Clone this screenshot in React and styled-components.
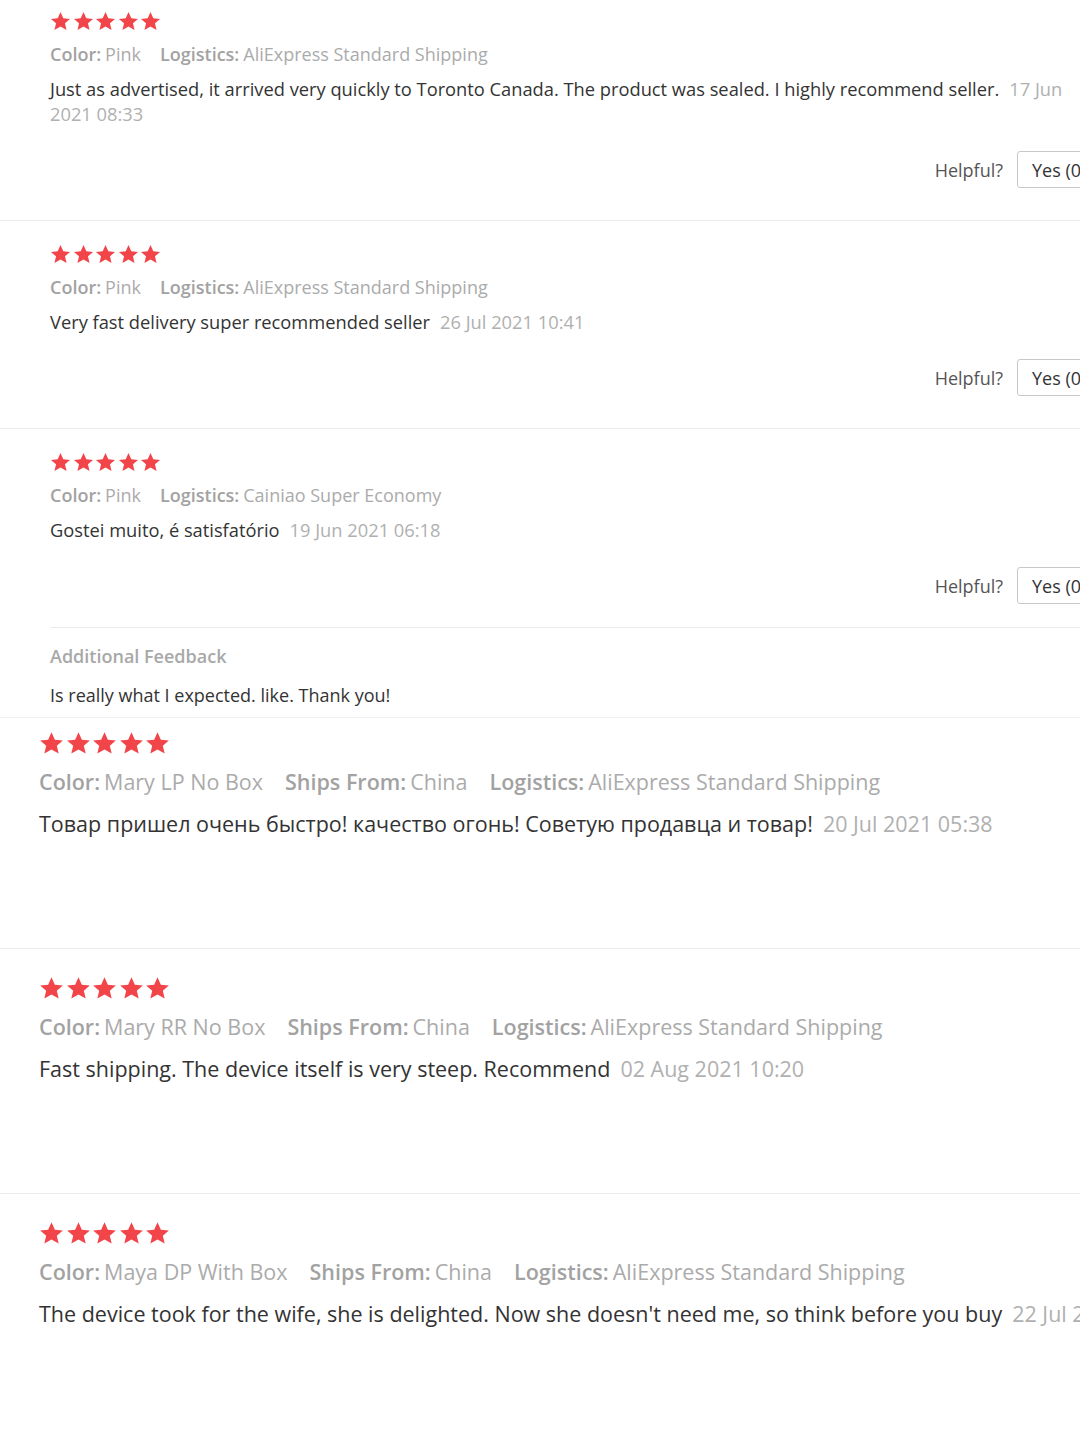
import React from 'react'
import styled, { createGlobalStyle } from 'styled-components'

const GlobalStyle = createGlobalStyle`
    html, body {
        margin: 0;
        padding: 0;
        background: #ffffff;
    }
    body {
        font-family: "Open Sans", "Noto Sans", sans-serif;
        overflow: hidden;
    }
`

const Page = styled.div`
    width: 1080px;
    height: 1438px;
    overflow: hidden;
    background: #fff;
`

// the top capture is from a wider page, so it runs past the right edge
const TopSection = styled.div`
    width: 1125px;
    border-bottom: 1px solid #f0f0f0;
`

const BottomSection = styled.div`
    width: 1080px;
`

const Item = styled.div`
    padding: ${p => p.$pt - (p.$crop || 0)}px 0 ${p => p.$pb}px ${p => p.$pl}px;
    border-bottom: ${p => p.$last ? 'none' : '1px solid #ececec'};
`

const Stars = styled.div`
    display: flex;
    gap: ${p => p.$gap}px;
    height: ${p => p.$size}px;
`

const Meta = styled.div`
    display: flex;
    gap: ${p => p.$gap}px;
    margin-top: ${p => p.$mt}px;
    font-size: ${p => p.$fs}px;
    line-height: ${p => p.$lh}px;
    color: #ababab;
    white-space: nowrap;
`

const MetaLabel = styled.span`
    font-weight: 600;
    color: #a2a2a2;
    margin-right: 4px;
`

const Body = styled.div`
    margin-top: ${p => p.$mt}px;
    font-size: ${p => p.$fs}px;
    line-height: ${p => p.$lh}px;
    color: #333;
    width: ${p => p.$w}px;
    white-space: ${p => p.$nowrap ? 'nowrap' : 'normal'};
`

const DateText = styled.span`
    color: #b0b0b0;
    margin-left: 10px;
`

const HelpfulRow = styled.div`
    display: flex;
    justify-content: flex-end;
    align-items: center;
    gap: 14px;
    margin-top: 25px;
    font-size: 18px;
`

const HelpfulLabel = styled.span`
    color: #555;
`

const YesButton = styled.button`
    height: 37px;
    padding: 0 14px;
    font-family: inherit;
    font-size: 18px;
    color: #333;
    background: #fff;
    border: 1px solid #c8c8c8;
    border-radius: 3px;
    width: 108px;
    text-align: left;
`

const Feedback = styled.div`
    margin-top: 23px;
    border-top: 1px solid #ececec;
    padding-top: 16px;
`

const FeedbackTitle = styled.div`
    font-size: 18px;
    line-height: 24px;
    font-weight: 600;
    color: #a8a8a8;
`

const FeedbackText = styled.div`
    margin-top: 15px;
    font-size: 18px;
    line-height: 24px;
    color: #333;
`

const Star = ({ size }) => (
    <svg width={size} height={size} viewBox="0 0 24 24">
        <path
            fill="#f2454a"
            d="M12 1.2l3.2 7.1 7.7.7-5.8 5.1 1.8 7.6L12 17.7l-6.9 4 1.8-7.6L1.1 9l7.7-.7z"
        />
    </svg>
)

const StarRow = ({ size, gap }) => (
    <Stars $size={size} $gap={gap}>
        {[0, 1, 2, 3, 4].map(i => <Star key={i} size={size} />)}
    </Stars>
)

const topReviews = [
    {
        id: 't1',
        meta: [['Color:', 'Pink'], ['Logistics:', 'AliExpress Standard Shipping']],
        text: 'Just as advertised, it arrived very quickly to Toronto Canada. The product was sealed. I highly recommend seller.',
        date: '17 Jun 2021 08:33'
    },
    {
        id: 't2',
        meta: [['Color:', 'Pink'], ['Logistics:', 'AliExpress Standard Shipping']],
        text: 'Very fast delivery super recommended seller',
        date: '26 Jul 2021 10:41'
    },
    {
        id: 't3',
        meta: [['Color:', 'Pink'], ['Logistics:', 'Cainiao Super Economy']],
        text: 'Gostei muito, é satisfatório',
        date: '19 Jun 2021 06:18',
        feedback: 'Is really what I expected. like. Thank you!'
    }
]

const bottomReviews = [
    {
        id: 'b1',
        meta: [['Color:', 'Mary LP No Box'], ['Ships From:', 'China'], ['Logistics:', 'AliExpress Standard Shipping']],
        text: 'Товар пришел очень быстро! качество огонь! Советую продавца и товар!',
        date: '20 Jul 2021 05:38'
    },
    {
        id: 'b2',
        meta: [['Color:', 'Mary RR No Box'], ['Ships From:', 'China'], ['Logistics:', 'AliExpress Standard Shipping']],
        text: 'Fast shipping. The device itself is very steep. Recommend',
        date: '02 Aug 2021 10:20'
    },
    {
        id: 'b3',
        meta: [['Color:', 'Maya DP With Box'], ['Ships From:', 'China'], ['Logistics:', 'AliExpress Standard Shipping']],
        text: 'The device took for the wife, she is delighted. Now she doesn\'t need me, so think before you buy',
        date: '22 Jul 2021 09:12'
    }
]

const MetaLine = ({ items, ...rest }) => (
    <Meta {...rest}>
        {items.map(([label, value]) => (
            <span key={label}><MetaLabel>{label}</MetaLabel>{value}</span>
        ))}
    </Meta>
)

export default function App() {
    return (
        <Page>
            <GlobalStyle />
            <TopSection>
                {topReviews.map((r, i) => (
                    <Item key={r.id} $crop={i === 0 ? 12 : 0} $last={i === topReviews.length - 1} $pt={23} $pb={r.feedback ? 10 : 32} $pl={50}>
                        <StarRow size={21} gap={1.5} />
                        <MetaLine items={r.meta} $gap={19} $mt={10} $fs={18} $lh={24} />
                        <Body $mt={10} $fs={18.3} $lh={25} $w={1022}>
                            {r.text}<DateText>{r.date}</DateText>
                        </Body>
                        <HelpfulRow>
                            <HelpfulLabel>Helpful?</HelpfulLabel>
                            <YesButton>Yes (0)</YesButton>
                        </HelpfulRow>
                        {r.feedback && (
                            <Feedback>
                                <FeedbackTitle>Additional Feedback</FeedbackTitle>
                                <FeedbackText>{r.feedback}</FeedbackText>
                            </Feedback>
                        )}
                    </Item>
                ))}
            </TopSection>
            <BottomSection>
                {bottomReviews.map((r, i) => (
                    <Item key={r.id} $crop={i === 0 ? 14 : 0} $last={i === bottomReviews.length - 1} $pt={27} $pb={110} $pl={39}>
                        <StarRow size={25} gap={1.5} />
                        <MetaLine items={r.meta} $gap={22} $mt={12} $fs={21.5} $lh={28} />
                        <Body $mt={14} $fs={21.5} $lh={28} $w={1100} $nowrap>
                            {r.text}<DateText>{r.date}</DateText>
                        </Body>
                    </Item>
                ))}
            </BottomSection>
        </Page>
    )
}
